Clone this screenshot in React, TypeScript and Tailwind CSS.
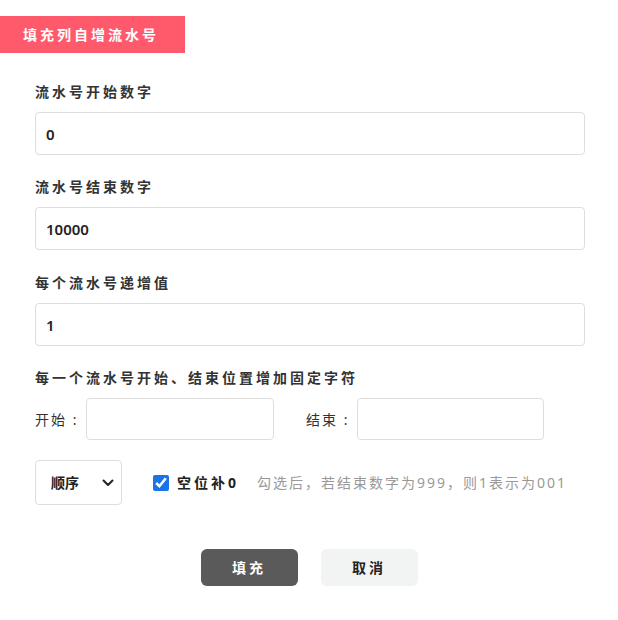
import { useState } from "react";

const font = {
  fontFamily: '"Noto Sans", "Noto Sans CJK SC", sans-serif',
};

function Field({ label, value, className }: { label: string; value: string; className?: string }) {
  return (
    <div className={"flex flex-col " + (className ?? "")}>
      <label className="text-[14px] leading-[20px] font-bold tracking-[3px] text-[#333]">
        {label}
      </label>
      <input
        defaultValue={value}
        className="mt-[10px] h-[43px] w-[550px] rounded-[4px] border border-[#dedede] px-[10px] text-[15px] font-semibold text-[#222] outline-none"
      />
    </div>
  );
}

export default function App() {
  const [padZero, setPadZero] = useState(true);

  return (
    <div className="h-[620px] w-[618px] bg-white" style={font}>
      <div className="pt-[16px]">
        <div className="flex h-[37px] w-[185px] items-center bg-[#ff5a6b] pl-[23px] text-[14px] font-bold tracking-[3px] text-white">
          填充列自增流水号
        </div>
      </div>

      <div className="flex flex-col gap-[22px] px-[35px] pt-[29px]">
        <Field label="流水号开始数字" value="0" />
        <Field label="流水号结束数字" value="10000" />
        <Field label="每个流水号递增值" value="1" className="mt-[1px]" />

        <div className="flex flex-col">
          <label className="text-[14px] leading-[20px] font-bold tracking-[3px] text-[#333]">
            每一个流水号开始、结束位置增加固定字符
          </label>
          <div className="mt-[10px] flex items-center">
            <span className="w-[51px] text-[14px] tracking-[2px] text-[#333]">开始 :</span>
            <input className="h-[42px] w-[188px] rounded-[4px] border border-[#dedede] px-[10px] outline-none" />
            <span className="ml-[32px] w-[51px] text-[14px] tracking-[2px] text-[#333]">结束 :</span>
            <input className="h-[42px] w-[187px] rounded-[4px] border border-[#dedede] px-[10px] outline-none" />
          </div>
        </div>

        <div className="-mt-[2px] flex items-center">
          <div className="relative flex h-[45px] w-[87px] items-center rounded-[4px] border border-[#dedede] pl-[15px] text-[14px] font-bold text-[#222]">
            顺序
            <svg
              className="absolute right-[7px] top-[18px]"
              width="12"
              height="8"
              viewBox="0 0 12 8"
              fill="none"
            >
              <path d="M1.5 1.5L6 6L10.5 1.5" stroke="#222" strokeWidth="2" strokeLinecap="round" strokeLinejoin="round" />
            </svg>
          </div>
          <label className="ml-[31px] flex items-center">
            <input
              type="checkbox"
              checked={padZero}
              onChange={() => setPadZero(!padZero)}
              className="h-[16px] w-[16px] accent-[#1a73e8]"
            />
            <span className="ml-[8px] text-[14px] font-bold tracking-[3px] text-[#222]">空位补0</span>
          </label>
          <span className="ml-[18px] text-[14px] tracking-[2px] text-[#999]">
            勾选后，若结束数字为999，则1表示为001
          </span>
        </div>
      </div>

      <div className="mt-[44px] flex justify-center gap-[23px]">
        <button className="h-[37px] w-[97px] rounded-[6px] bg-[#5a5a5a] text-[14px] font-bold tracking-[3px] text-white">
          填充
        </button>
        <button className="h-[37px] w-[97px] rounded-[6px] bg-[#f2f3f3] text-[14px] font-bold tracking-[3px] text-[#222]">
          取消
        </button>
      </div>
    </div>
  );
}
